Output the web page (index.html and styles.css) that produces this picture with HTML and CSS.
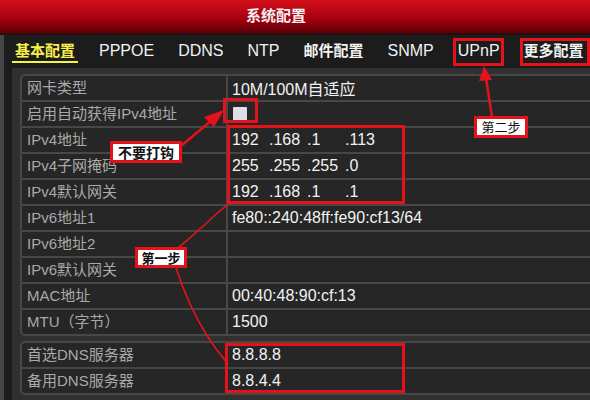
FILE: index.html
```html
<!DOCTYPE html>
<html lang="zh-CN">
    <head>
        <meta charset="UTF-8">
        <title>系统配置</title>
        <link rel="stylesheet" href="styles.css">
    </head>
    <body>
        <div class="window">
            <div class="titlebar">系统配置</div>
            <div class="main">
                <div class="tabs">
                    <span class="tab tab-cjk tab-active">基本配置</span>
                    <span class="tab">PPPOE</span>
                    <span class="tab">DDNS</span>
                    <span class="tab">NTP</span>
                    <span class="tab tab-cjk">邮件配置</span>
                    <span class="tab">SNMP</span>
                    <span class="tab">UPnP</span>
                    <span class="tab tab-cjk">更多配置</span>
                </div>
                <div class="panel">
                    <div class="group">
                        <div class="row"><div class="label">网卡类型</div><div class="value">10M/100M自适应</div></div>
                        <div class="row"><div class="label">启用自动获得IPv4地址</div><div class="value"><span class="checkbox"></span></div></div>
                        <div class="row"><div class="label">IPv4地址</div><div class="value ip"><span>192</span><span>.168</span><span>.1</span><span>.113</span></div></div>
                        <div class="row"><div class="label">IPv4子网掩码</div><div class="value ip"><span>255</span><span>.255</span><span>.255</span><span>.0</span></div></div>
                        <div class="row"><div class="label">IPv4默认网关</div><div class="value ip"><span>192</span><span>.168</span><span>.1</span><span>.1</span></div></div>
                        <div class="row"><div class="label">IPv6地址1</div><div class="value">fe80::240:48ff:fe90:cf13/64</div></div>
                        <div class="row"><div class="label">IPv6地址2</div><div class="value"></div></div>
                        <div class="row"><div class="label">IPv6默认网关</div><div class="value"></div></div>
                        <div class="row"><div class="label">MAC地址</div><div class="value">00:40:48:90:cf:13</div></div>
                        <div class="row"><div class="label">MTU（字节）</div><div class="value">1500</div></div>
                    </div>
                    <div class="group group-dns">
                        <div class="row"><div class="label">首选DNS服务器</div><div class="value">8.8.8.8</div></div>
                        <div class="row"><div class="label">备用DNS服务器</div><div class="value">8.8.4.4</div></div>
                    </div>
                </div>
            </div>

            <!-- annotations drawn over the screen -->
            <svg class="marks" width="590" height="400" viewBox="0 0 590 400">
                <g fill="none" stroke="#e5121c" stroke-width="3">
                    <rect x="454.5" y="39.5" width="48" height="25"/>
                    <rect x="521.5" y="39.5" width="67" height="25"/>
                    <rect x="224.5" y="99.5" width="32" height="22"/>
                    <rect x="228.5" y="126.5" width="175" height="76"/>
                    <rect x="226.5" y="344.5" width="177" height="47"/>
                </g>
                <g fill="none" stroke="#e5121c" stroke-width="2.5">
                    <line x1="181" y1="146" x2="212" y2="120"/>
                    <line x1="492" y1="117" x2="486" y2="78"/>
                </g>
                <g fill="#e5121c">
                    <polygon points="224,110 204,117 214,127"/>
                    <polygon points="484,66 479,81 492,80"/>
                </g>
                <g fill="none" stroke="#e5121c" stroke-width="1.6">
                    <path d="M177 249 C 192 236, 206 224, 213 217 S 224 208, 228 204"/>
                    <path d="M176 268 C 184 292, 196 318, 206 334 S 222 357, 228 364"/>
                </g>
            </svg>
            <div class="note note-check">不要打钩</div>
            <div class="note note-step2">第二步</div>
            <div class="note note-step1">第一步</div>
        </div>
    </body>
</html>
```

FILE: styles.css
```css
body {
    margin: 0;
    padding: 0;
    background-color: #1d1d1d;
    font-family: "Liberation Sans", "Noto Sans CJK SC", sans-serif;
}

.window {
    position: relative;
    width: 590px;
    height: 400px;
    overflow: hidden;
    background-color: #1d1d1d;
}

.titlebar {
    height: 33px;
    line-height: 31px;
    padding-right: 38px;
    text-align: center;
    color: #f2f2f2;
    font-size: 15px;
    font-weight: bold;
    background: linear-gradient(#d3101c, #a8000f 55%, #5a0008);
    border-bottom: 2px solid #2a0c0c;
}

.main {
    height: 365px;
    border-left: 4px solid #454545;
    background-color: #1c1c1c;
}

.tabs {
    height: 33px;
    display: flex;
    align-items: center;
    gap: 24px;
    padding-left: 11px;
}

.tab {
    color: #f2f2f2;
    font-size: 16px;
    line-height: 20px;
    border-bottom: 2px solid transparent;
}

.tab-cjk {
    font-size: 15px;
    font-weight: bold;
}

.tab-active {
    color: #f6f24a;
    border-bottom-color: #f6f24a;
    padding: 0 3px;
    margin: 0 -3px;
}

.panel {
    height: 332px;
    margin-left: 8px;
    margin-right: -12px;
    padding: 6px 0 0 8px;
    background-color: #303030;
}

.group {
    border: 2px solid #474747;
    border-radius: 5px;
    background-color: #262626;
}

.group-dns {
    margin-top: 5px;
}

.row {
    display: flex;
    height: 26px;
    border-bottom: 2px solid #474747;
    box-sizing: border-box;
}

.row:last-child {
    height: 24px;
    border-bottom: none;
}

.label {
    width: 204px;
    padding-left: 5px;
    box-sizing: border-box;
    color: #a9a9a9;
    font-size: 15px;
    line-height: 24px;
}

.value {
    flex: 1;
    display: flex;
    align-items: center;
    padding-left: 4px;
    border-left: 2px solid #474747;
    color: #f2f2f2;
    font-size: 16px;
}

.ip span {
    display: inline-block;
    width: 38px;
}

.ip span:first-child {
    width: 37px;
}

.checkbox {
    width: 14px;
    height: 14px;
    margin-left: 1px;
    background-color: #dedee6;
    border-radius: 1px;
}

.marks {
    position: absolute;
    left: 0;
    top: 0;
    pointer-events: none;
}

.note {
    position: absolute;
    box-sizing: border-box;
    background-color: #fff;
    border: 3px solid #e5121c;
    color: #111;
    font-family: "Noto Sans CJK SC", sans-serif;
    font-weight: bold;
    text-align: center;
}

.note-check {
    left: 110px;
    top: 141px;
    width: 72px;
    height: 22px;
    font-size: 14px;
    line-height: 16px;
}

.note-step2 {
    left: 474px;
    top: 116px;
    width: 54px;
    height: 22px;
    font-size: 13px;
    font-weight: normal;
    line-height: 16px;
}

.note-step1 {
    left: 135px;
    top: 247px;
    width: 52px;
    height: 21px;
    font-size: 13px;
    line-height: 15px;
}
```
